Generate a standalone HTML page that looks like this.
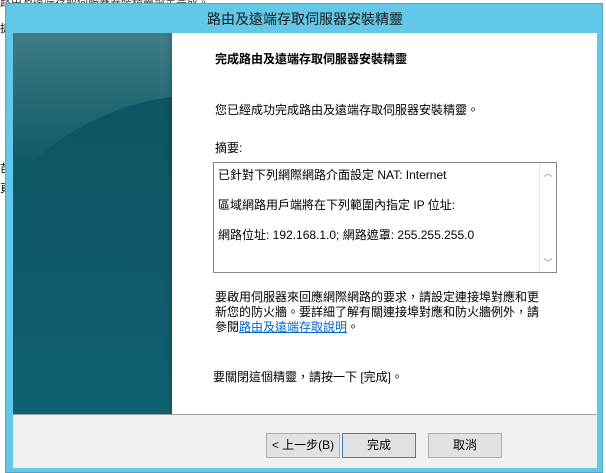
<!DOCTYPE html>
<html><head><meta charset="utf-8"><style>
*{margin:0;padding:0;box-sizing:border-box}
body{width:606px;height:471px;background:#fff;position:relative;overflow:hidden;font-family:"Liberation Sans","Noto Sans CJK TC",sans-serif;font-size:12px;color:#000}
.a{position:absolute;white-space:nowrap}
#frame{position:absolute;left:5px;top:3px;width:598px;height:470px;background:#63c8e8;border:1px solid #4aa9c9}
#title{left:0;width:598px;top:5px;text-align:center;font-size:14px;color:#1a1a1a}
#panel{position:absolute;left:7px;top:29px;width:584px;height:381px;background:#fff}
#img{position:absolute;left:0;top:0;width:159px;height:381px;background:linear-gradient(180deg,#3f7d86 0%,#0f5866 35%,#0f5f70 70%,#147e8e 100%);overflow:hidden}
#img:before{content:"";position:absolute;left:-60px;top:62px;width:500px;height:500px;border-radius:50%;background:linear-gradient(180deg,#0e5563,#0f5f6f 60%,#168391);}
#img:after{content:"";position:absolute;right:0;top:0;width:6px;height:100%;background:linear-gradient(90deg,rgba(0,0,0,0),rgba(0,0,0,.12))}
#foot{position:absolute;left:7px;top:410px;width:584px;height:54px;background:#f0f0f0;border-top:1px solid #a0a0a0}
.btn{position:absolute;top:18px;height:25px;width:74px;background:#e1e1e1;border:1px solid #adadad;text-align:center;line-height:23px}
#tb{position:absolute;left:200px;top:129px;width:344px;height:111px;border:1px solid #828790;background:#fff}
#sb{position:absolute;right:0;top:0;width:17px;height:109px;background:#fff;border-left:1px solid #e6e6e6;color:#888;font-size:9px;text-align:center}
</style></head><body>
<div class="a" style="left:0;top:-6px;font-size:11px;color:#333">路由及遠端存取伺服器安裝精靈設定完成。</div>
<div class="a" style="left:0;top:20px;font-size:11px">捷</div>
<div class="a" style="left:0;top:160px;font-size:11px">苗</div>
<div class="a" style="left:0;top:180px;font-size:11px">頁</div>
<div id="frame">
<div class="a" id="title">路由及遠端存取伺服器安裝精靈</div>
<div id="panel">
<div id="img"></div>
<div class="a" style="left:202px;top:17px;font-weight:bold">完成路由及遠端存取伺服器安裝精靈</div>
<div class="a" style="left:202px;top:68px">您已經成功完成路由及遠端存取伺服器安裝精靈。</div>
<div class="a" style="left:202px;top:106px">摘要:</div>
<div id="tb">
<div class="a" style="left:4px;top:3px">已針對下列網際網路介面設定 NAT: Internet</div>
<div class="a" style="left:4px;top:33px">區域網路用戶端將在下列範圍內指定 IP 位址:</div>
<div class="a" style="left:4px;top:63px">網路位址: 192.168.1.0; 網路遮罩: 255.255.255.0</div>
<div id="sb"><div style="position:absolute;top:3px;width:16px">︿</div><div style="position:absolute;bottom:3px;width:16px">﹀</div></div>
</div>
<div class="a" style="left:202px;top:257px;line-height:15px">要啟用伺服器來回應網際網路的要求，請設定連接埠對應和更<br>新您的防火牆。要詳細了解有關連接埠對應和防火牆例外，請<br>參閱<span style="color:#0066cc;text-decoration:underline">路由及遠端存取說明</span>。</div>
<div class="a" style="left:200px;top:335px">要關閉這個精靈，請按一下 [完成]。</div>
</div>
<div id="foot">
<div class="btn" style="left:253px">&lt; 上一步(B)</div>
<div class="btn" style="left:329px;border-color:#3c7fb1">完成</div>
<div class="btn" style="left:415px">取消</div>
</div>
</div>
</body></html>
